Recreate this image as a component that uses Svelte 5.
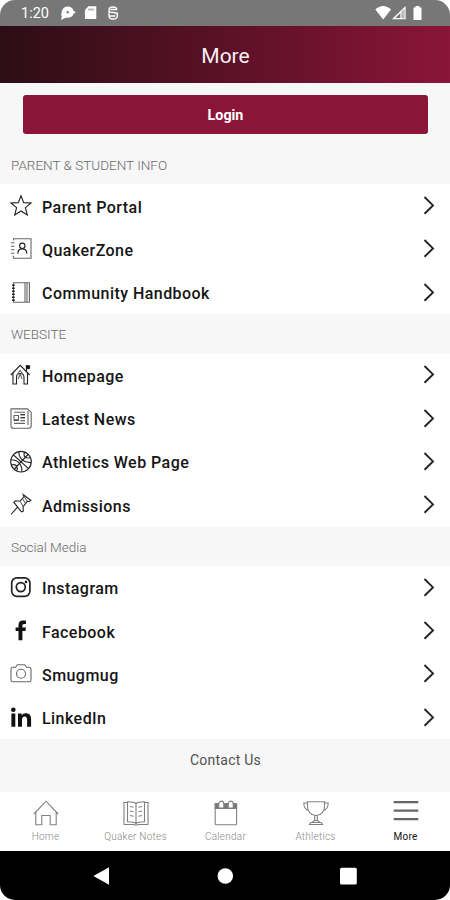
<script lang="ts">
	type Item = { label: string; icon: string };

	const sections: { title: string; items: Item[] }[] = [
		{
			title: 'PARENT & STUDENT INFO',
			items: [
				{ label: 'Parent Portal', icon: 'star' },
				{ label: 'QuakerZone', icon: 'contact' },
				{ label: 'Community Handbook', icon: 'notebook' }
			]
		},
		{
			title: 'WEBSITE',
			items: [
				{ label: 'Homepage', icon: 'house' },
				{ label: 'Latest News', icon: 'news' },
				{ label: 'Athletics Web Page', icon: 'ball' },
				{ label: 'Admissions', icon: 'pin' }
			]
		},
		{
			title: 'Social Media',
			items: [
				{ label: 'Instagram', icon: 'instagram' },
				{ label: 'Facebook', icon: 'facebook' },
				{ label: 'Smugmug', icon: 'camera' },
				{ label: 'LinkedIn', icon: 'linkedin' }
			]
		}
	];

	const tabs: Item[] = [
		{ label: 'Home', icon: 'home' },
		{ label: 'Quaker Notes', icon: 'book' },
		{ label: 'Calendar', icon: 'calendar' },
		{ label: 'Athletics', icon: 'trophy' },
		{ label: 'More', icon: 'menu' }
	];

	let active = $state('More');
</script>

{#snippet rowIcon(name: string)}
	<svg class="row-icon" viewBox="0 0 22 22">
		{#if name === 'star'}
			<path d="M11 .8l2.700 6.800 7.400.4-5.700 4.700 1.900 7.300-6.300-4-6.300 4 1.900-7.300L.9 8l7.400-.4z" />
		{:else if name === 'contact'}
			<path class="soft" d="M3.500 2.500V.7h17.500v19.600H3.500v-1.500" />
			<path class="soft" d="M1 4.700h3.500M1 8.200h3.500M1 11.700h3.500M1 15.200h3.500M2.500 18.300h1.500" />
			<circle cx="12.300" cy="7.800" r="2.700" />
			<path d="M7.800 15.700c0-3 1.500-4.800 4.500-4.800s4.500 1.800 4.500 4.800" />
		{:else if name === 'notebook'}
			<path class="soft" d="M3.500.7h15.900v19.600H3.500zM15 .7v19.600M17 .7v19.600" />
			<path class="rings" d="M2 3.200h2.700M2 6.200h2.700M2 9.200h2.700M2 12.200h2.700M2 15.200h2.700M2 18.200h2.700" />
		{:else if name === 'house'}
			<path d="M.8 11L10.200 1.300 19.700 11M3 9.200v10.800h3.500v-6.500c0-5.300 7.500-5.300 7.500 0v6.500h3.500V9.200" />
			<path class="soft" d="M7 11l3.200-4.500 3.300 4.500M10.200 10l-2 5M10.200 10l2 5" />
			<path class="solid" d="M15.800 1l4.500.4-.6 3.800-3.900-.4z" />
			<path d="M16.500 3.500v4" />
		{:else if name === 'news'}
			<path class="soft" d="M1 .9h16.500l3.700 3.500V17.500c0 2-1 2.800-2.800 2.800H3.500C1.800 20.300 1 19.500 1 18zM18 3v14" />
			<path class="soft" d="M4 7.500h4.500v4.500H4zM10.500 6.800H15M10.500 9.800H15M10.500 12.600H15M4 15.400h11M4 4.200h11" />
			<path d="M10.500 6.800H15M10.500 9.800H15M4 12.200h4.500" />
		{:else if name === 'ball'}
			<circle cx="11" cy="10.700" r="10.300" />
			<path d="M3.500 4l15 13.600M18 3.500L4.300 18M9 .8c-.5 6 4 10.500 12 10.800M1 8.800c7 0 11.500 4.700 10.800 12M14.500 1.200c-1.500 4 1 6.800 5.500 5.500M1.500 14c4-1.500 6.500 1.500 5.500 5.500" />
		{:else if name === 'pin'}
			<path d="M13.300.8l7.500 5.500-1.800 1.300-1.700-.3-4.200 5.300.2 4.600-1.800.7L3.800 8.200l1.600-1.400 4.700.4 3.900-4.700zM7.300 13.300L1 20.500" />
			<path class="soft" d="M10.200 7.200l3 5.200M14 2.500l3.300 4.800M12.500 4.500l3 5" />
		{:else if name === 'instagram'}
			<rect x="1.700" y=".9" width="18.200" height="18.400" rx="5.200" class="medium" />
			<circle cx="10.800" cy="10.100" r="4.500" class="medium" />
			<circle cx="16" cy="4.900" r="1.300" class="solid" />
		{:else if name === 'facebook'}
			<path class="solid" d="M8.500 20.300v-9.300H5.600V7.500h2.900V5C8.500 2 10.200.6 13.100.6c1.400 0 2.900.2 2.900.2v3.100h-1.700c-1.500 0-1.900.8-1.900 1.800v1.800h3.600l-.6 3.500h-3v9.300z" />
		{:else if name === 'camera'}
			<path class="soft" d="M1 6.200c0-1.200.7-1.900 1.900-1.900H5.500L7.300 1.800h7.400l1.800 2.500h2.600c1.200 0 1.900.7 1.900 1.900v10.700c0 1.200-.7 1.900-1.900 1.900H2.900c-1.200 0-1.900-.7-1.900-1.900z" />
			<circle class="soft" cx="11" cy="10.700" r="4.500" />
		{:else if name === 'linkedin'}
			<circle class="solid" cx="3.300" cy="2.800" r="2.300" />
			<path class="solid" d="M1.400 6.600h3.900V19.800H1.400zM8 6.600h3.700v1.800c.9-1.400 2.200-2.100 4-2.100 3.900 0 5.400 2.300 5.400 6v7.500h-4v-6.700c0-2.200-.7-3.500-2.400-3.500-1.900 0-2.700 1.300-2.700 3.500v6.700H8z" />
		{/if}
	</svg>
{/snippet}

{#snippet tabIcon(name: string)}
	<svg class="tab-icon" viewBox="0 0 28 28">
		{#if name === 'home'}
			<path d="M1.800 15L14 2.200 26.200 15M3.800 13.500V25.800h6v-9.300h8.400v9.300h6V13.500" />
		{:else if name === 'book'}
			<path d="M14 4.500c-1.500-1.500-5.500-1.800-8.500-1.800v20c3 0 7 .3 8.500 1.800 1.500-1.500 5.500-1.800 8.500-1.800v-20c-3 0-7 .3-8.500 1.800zM14 4.500v20M5.500 3.500H2v22h10.500c.8.900 2.200.9 3 0H26v-22h-3.500" />
			<path d="M8 7.500l3.500.8M8 12l3.500.8M8 16.500l3.500.8M20 7.500l-3.500.8M20 12l-3.500.8M20 16.500l-3.500.8" />
		{:else if name === 'calendar'}
			<rect x="3.200" y="4.500" width="21.400" height="21.300" rx="1" />
			<path class="band" d="M3.200 4.500h21.400v5H3.200z" />
			<path class="ring" d="M6.800 9V5c0-3.800 5-3.800 5 0v4zM16.200 9V5c0-3.800 5-3.800 5 0v4z" />
		{:else if name === 'trophy'}
			<path d="M5.500 2.700h17v5c0 5-3.500 8.800-8.500 8.800s-8.500-3.800-8.500-8.800zM5.500 4H1.800c0 4 1.800 6.800 5.300 7.800M22.500 4h3.700c0 4-1.800 6.800-5.300 7.800M12.700 16.500v5h2.600v-5M12.500 21.500l-2.500 2M15.500 21.500l2.500 2M7.500 25.500h13l-1.500-2H9z" />
		{:else if name === 'menu'}
			<path class="bars" d="M1.700 3.200h24.600M1.700 11.600h24.600M1.700 20.200h24.600" />
		{/if}
	</svg>
{/snippet}

<div class="screen">
	<div class="status">
		<span class="time">1:20</span>
		<svg class="notifications" viewBox="0 0 62 16">
			<path d="M7.500 1.500c3.500 0 5.500 1.800 5.900 4.200l2.400 1.500-2.200 1.600c-.8 2.500-3 4-6.100 4H5.500L1 15l.8-3.500C1 10 1.200 7.500 2.200 5.300 3.200 2.800 5 1.500 7.500 1.500z" />
			<circle class="hole" cx="7.700" cy="7.300" r="1.200" />
			<path d="M28.500 1.200H36.300v12.900H24.900V5z" />
			<path class="hole" d="M28.500 3.500v2h1v-2zm2 0v2h1v-2zm2 0v2h1v-2z" />
			<path class="line" d="M57 4.500c0-1.500-1.500-2.500-4-2.500S49 3 49 5s1.500 2.500 4 2.500 4.500 1 4.500 3S56 14 53 14s-4-1.500-4-3m1.500-6.500h6.500M49 11h6.500M49 5v6M57.300 7.500V11" />
		</svg>
		<svg class="signals" viewBox="0 0 48 16">
			<path d="M.3 4.500C5-.2 11.500-.2 16 4.500L8.200 14.500z" />
			<path class="line" d="M30 2.500v11.200H18.500zM26 7v6" />
			<path class="shade" d="M27 6.500v7h2v-9z" />
			<path d="M40.500 1h4v1.600h2V15h-8V2.600h2z" />
		</svg>
	</div>

	<header>More</header>

	<main>
		<div class="login">
			<button>Login</button>
		</div>

		{#each sections as section}
			<h2>{section.title}</h2>
			<ul>
				{#each section.items as item}
					<li>
						{@render rowIcon(item.icon)}
						<span>{item.label}</span>
						<svg class="chevron" viewBox="0 0 12 20">
							<path d="M1.500 1L10 9.400l-8.500 8.400" />
						</svg>
					</li>
				{/each}
			</ul>
		{/each}

		<div class="contact">Contact Us</div>
	</main>

	<nav>
		{#each tabs as tab}
			<button class="tab" class:active={active === tab.label} onclick={() => (active = tab.label)}>
				{@render tabIcon(tab.icon)}
				<span>{tab.label}</span>
			</button>
		{/each}
	</nav>

	<div class="system">
		<svg viewBox="0 0 16 18"><path d="M-.6 9L15 .3v17.400z" /></svg>
		<svg viewBox="0 0 16 18"><circle cx="8.300" cy="9" r="7.800" /></svg>
		<svg viewBox="0 0 16 18"><rect x="0" y=".7" width="16.800" height="16.800" rx="1.500" /></svg>
	</div>
</div>

<style>
	:global(body) {
		background: #fff;
	}

	.screen {
		display: flex;
		flex-direction: column;
		width: 450px;
		height: 900px;
		overflow: hidden;
		border-radius: 15px;
		background: #f7f7f7;
		font-family: Roboto, 'Liberation Sans', sans-serif;
		color: #151515;
	}

	svg {
		display: block;
		flex: none;
		overflow: visible;
	}

	button {
		border: 0;
		padding: 0;
		font-family: inherit;
	}

	.status {
		display: flex;
		align-items: center;
		height: 26px;
		flex: none;
		padding: 0 27px 0 21px;
		box-sizing: border-box;
		background: #777;
		color: #fff;
	}

	.time {
		width: 39px;
		font-size: 14.5px;
	}

	.status svg {
		height: 16px;
		fill: #fff;
	}

	.notifications {
		width: 62px;
	}

	.signals {
		width: 48px;
		margin-left: auto;
	}

	.status .hole {
		fill: #777;
	}

	.status .line {
		fill: none;
		stroke: #fff;
		stroke-width: 1.3;
	}

	.status .shade {
		fill: #bbb;
	}

	header {
		display: flex;
		align-items: center;
		justify-content: center;
		height: 57px;
		flex: none;
		padding: 2px 0 0 1px;
		box-sizing: border-box;
		background: linear-gradient(90deg, #2c0d16, #8a1538);
		color: #f8f1f3;
		font-size: 21px;
	}

	main {
		flex: 1;
	}

	.login {
		padding: 12px 22px 0 23px;
		height: 50px;
	}

	.login button {
		display: block;
		width: 100%;
		height: 39px;
		border-radius: 3px;
		background: #8a1538;
		color: #fff;
		font-size: 14.3px;
		font-weight: 700;
	}

	h2 {
		display: flex;
		align-items: center;
		height: 39.4px;
		margin: 0;
		padding-left: 11px;
		font-size: 13.5px;
		font-weight: 300;
		color: #6a6a6a;
	}

	ul {
		margin: 0;
		padding: 0;
		list-style: none;
		background: #fff;
	}

	li {
		display: flex;
		align-items: center;
		height: 43.3px;
		padding: 0 15px 0 10px;
		font-size: 16px;
		font-weight: 500;
		letter-spacing: 0.45px;
	}

	li span {
		flex: 1;
		padding: 2px 0 0 10px;
	}

	.row-icon {
		width: 22px;
		height: 22px;
		fill: none;
		stroke: #222;
		stroke-width: 1.1;
	}

	.row-icon .soft {
		stroke: #666;
	}

	.row-icon .medium {
		stroke-width: 1.7;
	}

	.row-icon .rings {
		stroke-width: 1.4;
	}

	.row-icon .solid {
		fill: #111;
		stroke: none;
	}

	.chevron {
		width: 12px;
		height: 20px;
		fill: none;
		stroke: #222;
		stroke-width: 1.9;
	}

	.contact {
		padding: 13px 0 0 1px;
		text-align: center;
		font-size: 14px;
		letter-spacing: 0.25px;
		color: #505050;
	}

	nav {
		display: flex;
		height: 59px;
		flex: none;
		background: #fff;
	}

	.tab {
		display: flex;
		flex: 1;
		flex-direction: column;
		align-items: center;
		padding: 7px 0 0 1px;
		background: none;
		color: #888;
		font-size: 10px;
		font-weight: 300;
		letter-spacing: 0.25px;
	}

	.tab.active {
		color: #111;
		font-weight: 400;
	}

	.tab span {
		margin-top: 4px;
		line-height: 12px;
	}

	.tab-icon {
		width: 28px;
		height: 28px;
		fill: none;
		stroke: #808080;
		stroke-width: 1.1;
	}

	.tab-icon .band {
		fill: #777;
	}

	.tab-icon .ring {
		fill: #fff;
	}

	.tab-icon .bars {
		stroke: #666;
		stroke-width: 2.2;
	}

	.system {
		display: flex;
		align-items: center;
		justify-content: space-between;
		height: 49px;
		flex: none;
		padding: 0 94px;
		box-sizing: border-box;
		background: #000;
	}

	.system svg {
		width: 16px;
		height: 18px;
		fill: #fff;
	}
</style>
